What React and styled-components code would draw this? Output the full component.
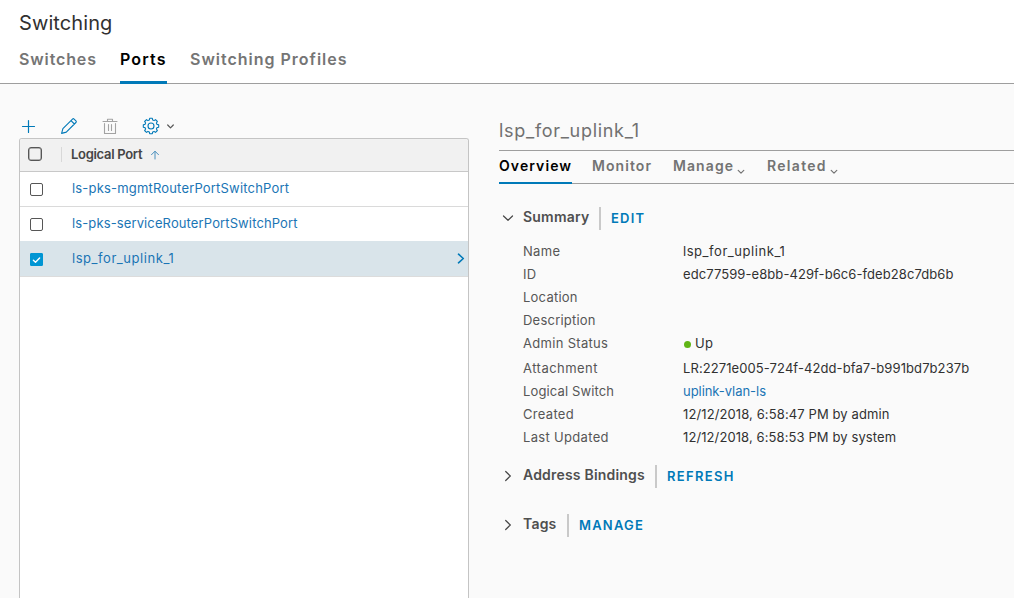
import React from "react";
import styled, { createGlobalStyle } from "styled-components";

const GlobalStyle = createGlobalStyle`
  * { box-sizing: border-box; }
  body {
    margin: 0;
    background: #fafafa;
    color: #313131;
    font: 400 13px/23px Inter, "Liberation Sans", sans-serif;
    white-space: nowrap;
    overflow: hidden;
  }
`;

const blue = "#0079b8";
const linkBlue = "#1a75b5";

const Page = styled.div`
  display: flex;
  flex-direction: column;
  height: 598px;
  overflow: hidden;
`;

const Header = styled.header`
  height: 84px;
  padding: 10px 0 0 19px;
  background: #fff;
  border-bottom: 1px solid #9e9e9e;
`;

const PageTitle = styled.h1`
  margin: 0;
  font-size: 20px;
  font-weight: 400;
  line-height: 26px;
  letter-spacing: 0.1px;
  color: #313131;
`;

const MainTabs = styled.nav`
  display: flex;
  gap: 23px;
  height: 48px;
`;

const MainTab = styled.a`
  height: 48px;
  padding-top: 12px;
  font-size: 16px;
  font-weight: 600;
  line-height: 23px;
  letter-spacing: ${(p) => p.$spacing};
  width: ${(p) => p.$width};
  color: ${(p) => (p.$active ? "#000" : "#757575")};
  border-bottom: 3px solid ${(p) => (p.$active ? blue : "transparent")};
`;

const Body = styled.main`
  display: flex;
  flex: 1;
  min-height: 0;
`;

const ListPane = styled.section`
  display: flex;
  flex-direction: column;
  width: 450px;
  margin-left: 19px;
  padding-top: 31px;
`;

const Toolbar = styled.div`
  display: flex;
  align-items: center;
  height: 22px;
  margin-bottom: 1px;
  padding-left: 1px;
`;

const ToolButton = styled.button`
  display: flex;
  align-items: center;
  gap: 6px;
  height: 20px;
  width: ${(p) => p.$width || "41px"};
  padding: 0;
  border: 0;
  background: none;
  color: ${(p) => (p.$disabled ? "#a3a3a3" : blue)};
`;

const Grid = styled.div`
  flex: 1;
  background: #fff;
  border: 1px solid #c4c4c4;
  border-bottom: 0;
  border-radius: 3px 3px 0 0;
`;

const GridHead = styled.div`
  display: flex;
  align-items: center;
  height: 33px;
  padding: 0 8px;
  background: #f1f1f1;
  border-bottom: 1px solid #c8c8c8;
  border-radius: 2px 2px 0 0;
`;

const HeadLabel = styled.span`
  display: flex;
  align-items: center;
  gap: 8px;
  height: 15px;
  margin: -1px 0 0 19px;
  padding-left: 9px;
  border-left: 1px solid #d8d8d8;
  font-weight: 600;
  letter-spacing: -0.3px;
  color: #454545;
`;

const GridRow = styled.div`
  display: flex;
  align-items: center;
  height: 35px;
  padding: 0 3px 0 10px;
  background: ${(p) => (p.$selected ? "#d9e4ea" : "#fff")};
  border-bottom: 1px solid ${(p) => (p.$selected ? "#dcdcdc" : "#dadada")};
  ${(p) => p.$selected && "height: 36px; margin-top: -1px; padding-top: 1px;"}
  & > svg { margin-top: -2px; }
`;

const Box = styled.span`
  display: flex;
  align-items: center;
  justify-content: center;
  flex: none;
  width: ${(p) => (p.$large ? 14 : 13)}px;
  height: ${(p) => (p.$large ? 14 : 13)}px;
  margin-top: ${(p) => (p.$large ? -2 : 1)}px;
  border: 1px solid ${(p) => (p.$checked ? "#0095d3" : "#565656")};
  border-radius: ${(p) => (p.$checked ? 1 : p.$large ? 3 : 2)}px;
  background: ${(p) => (p.$checked ? "#0095d3" : "#fff")};
  ${(p) => p.$large && "background: transparent; box-shadow: inset 0 0 0 0.5px #777;"}
`;

const PortLink = styled.a`
  flex: 1;
  margin-left: 29px;
  padding-bottom: 1px;
  letter-spacing: ${(p) => p.$spacing};
  color: ${linkBlue};
`;

const DetailPane = styled.section`
  flex: 1;
  margin-left: 30px;
  padding-top: 35px;
`;

const DetailTitle = styled.h2`
  height: 32px;
  margin: 0;
  border-bottom: 1px solid #9e9e9e;
  font-size: 18px;
  font-weight: 400;
  line-height: 23px;
  letter-spacing: 0.7px;
  color: #717171;
`;

const DetailTabs = styled.nav`
  display: flex;
  gap: 20px;
  height: 33px;
  border-bottom: 1px solid #9e9e9e;
`;

const DetailTab = styled.a`
  display: flex;
  gap: 3px;
  height: 33px;
  padding-top: 3px;
  width: ${(p) => p.$width};
  border-bottom: 2px solid ${(p) => (p.$active ? blue : "transparent")};
  font-size: 14px;
  font-weight: 600;
  letter-spacing: ${(p) => p.$spacing};
  color: ${(p) => (p.$active ? "#000" : "#737373")};
  & > svg { margin-top: 15px; }
`;

const SectionHead = styled.div`
  display: flex;
  align-items: center;
  height: 24px;
  margin-top: ${(p) => p.$top};
  padding-left: 3px;
`;

const SectionTitle = styled.h3`
  margin: 0 0 0 9px;
  padding: 0 10px 2px 0;
  font-size: 14px;
  font-weight: 600;
  line-height: 22px;
  letter-spacing: 0.2px;
  width: ${(p) => p.$width};
  color: #4f4f4f;
`;

const Action = styled.a`
  height: 23px;
  padding-left: 10px;
  border-left: 2px solid #c9c9c9;
  font-weight: 600;
  line-height: 22px;
  letter-spacing: ${(p) => p.$spacing};
  color: ${blue};
`;

const Properties = styled.dl`
  margin: 10px 0 0 24px;
`;

const Property = styled.div`
  display: flex;
  height: ${(p) => (p.$tall ? 25 : 23)}px;
`;

const Term = styled.dt`
  width: 160px;
  letter-spacing: ${(p) => p.$spacing};
  color: #565656;
`;

const Value = styled.dd`
  display: flex;
  align-items: center;
  height: 23px;
  margin: 0;
  letter-spacing: ${(p) => p.$spacing};
  color: ${(p) => (p.$link ? linkBlue : "#313131")};
`;

const StatusDot = styled.i`
  width: 7px;
  height: 7px;
  margin: 2px 4px 0 1px;
  border-radius: 50%;
  background: #60b515;
`;

const Stroke = ({ w, h, d, color = "currentColor", width = 1.2 }) => (
  <svg width={w} height={h} viewBox={`0 0 ${w} ${h}`} fill="none" stroke={color}
    strokeWidth={width} strokeLinecap="round" strokeLinejoin="round" style={{ flex: "none" }}>
    <path d={d} />
  </svg>
);

const gearPath = (() => {
  const pts = [];
  for (let i = 0; i < 8; i++) {
    const a = (i * Math.PI) / 4;
    [[-0.27, 6.2], [-0.17, 7.8], [0.17, 7.8], [0.27, 6.2]].forEach(([o, r]) =>
      pts.push(`${(9 + r * Math.cos(a + o)).toFixed(2)} ${(9 + r * Math.sin(a + o)).toFixed(2)}`)
    );
  }
  return `M${pts.join("L")}Z M12 9a3 3 0 1 1-6 0a3 3 0 1 1 6 0Z`;
})();

const ports = [
  { name: "ls-pks-mgmtRouterPortSwitchPort", spacing: "0.18px" },
  { name: "ls-pks-serviceRouterPortSwitchPort", spacing: "0.12px" },
  { name: "lsp_for_uplink_1", spacing: "0.55px", selected: true },
];

const properties = [
  ["Name", "0.3px", "lsp_for_uplink_1", "0.55px"],
  ["ID", "0.2px", "edc77599-e8bb-429f-b6c6-fdeb28c7db6b", "0.08px"],
  ["Location", "0.23px"],
  ["Description", "0.22px"],
  ["Admin Status", "0.31px", "Up", "0.3px", "status"],
  ["Attachment", "0.47px", "LR:2271e005-724f-42dd-bfa7-b991bd7b237b", "0.09px"],
  ["Logical Switch", "0.13px", "uplink-vlan-ls", "-0.05px", "link"],
  ["Created", "0.3px", "12/12/2018, 6:58:47 PM by admin", "0.11px"],
  ["Last Updated", "0.32px", "12/12/2018, 6:58:53 PM by system", "0.1px"],
];

const TabCaret = () => <Stroke w={8} h={6} d="M1.2 1.4L4 4.2L6.8 1.4" />;

export default function App() {
  return (
    <Page>
      <GlobalStyle />
      <Header>
        <PageTitle>Switching</PageTitle>
        <MainTabs>
          <MainTab $width="78px" $spacing="0.87px">Switches</MainTab>
          <MainTab $width="47px" $spacing="1.15px" $active>Ports</MainTab>
          <MainTab $width="158px" $spacing="0.99px">Switching Profiles</MainTab>
        </MainTabs>
      </Header>
      <Body>
        <ListPane>
          <Toolbar>
            <ToolButton $width="40px" aria-label="Add">
              <Stroke w={16} h={16} d="M8.5 2.5V14.5M2.5 8.5H14.5" />
            </ToolButton>
            <ToolButton aria-label="Edit">
              <Stroke w={18} h={18} width={1.1}
                d="M1.6 16.4L2.9 11.7L12.5 2.1Q13.3 1.3 14.1 2.1L15.9 3.9Q16.7 4.7 15.9 5.5L6.3 15.1ZM11 3.6L14.4 7" />
            </ToolButton>
            <ToolButton $disabled aria-label="Delete">
              <Stroke w={18} h={18} width={1.1}
                d="M2 4.5H16M6.5 4.3V2.2H11.5V4.3M3.5 6.5V16.5H14.5V6.5M7.5 7.5V13.5M10.5 7.5V13.5" />
            </ToolButton>
            <ToolButton aria-label="Settings" $width="34px">
              <Stroke w={18} h={18} d={gearPath} width={1.1} />
              <Stroke w={9} h={7} d="M1.7 2L4.5 4.8L7.3 2" color="#565656" />
            </ToolButton>
          </Toolbar>
          <Grid>
            <GridHead>
              <Box $large />
              <HeadLabel>
                Logical Port
                <Stroke w={10} h={10} d="M5 9V1.4M1.5 4.7L5 1.2L8.5 4.7" color="#4a90bd" width={1} />
              </HeadLabel>
            </GridHead>
            {ports.map((p) => (
              <GridRow key={p.name} $selected={p.selected}>
                <Box $checked={p.selected}>
                  {p.selected && <Stroke w={9} h={8} d="M1.4 4.2L3.5 6.2L7.6 2" color="#fff" width={1.4} />}
                </Box>
                <PortLink $spacing={p.spacing}>{p.name}</PortLink>
                {p.selected && <Stroke w={8} h={11} d="M1.5 1.2L6.3 5.5L1.5 9.8" color={blue} width={1.6} />}
              </GridRow>
            ))}
          </Grid>
        </ListPane>
        <DetailPane>
          <DetailTitle>lsp_for_uplink_1</DetailTitle>
          <DetailTabs>
            <DetailTab $width="73px" $spacing="1.08px" $active>Overview</DetailTab>
            <DetailTab $width="61px" $spacing="1.07px">Monitor</DetailTab>
            <DetailTab $width="74px" $spacing="1.08px">Manage<TabCaret /></DetailTab>
            <DetailTab $width="74px" $spacing="1.3px">Related<TabCaret /></DetailTab>
          </DetailTabs>
          <SectionHead $top="22px">
            <Stroke w={12} h={8} d="M1.5 2L6 6.3L10.5 2" color="#454545" />
            <SectionTitle $width="76px">Summary</SectionTitle>
            <Action $spacing="1.2px">EDIT</Action>
          </SectionHead>
          <Properties>
            {properties.map(([term, ts, value, vs, kind]) => (
              <Property key={term} $tall={kind === "status"}>
                <Term $spacing={ts}>{term}</Term>
                <Value $spacing={vs} $link={kind === "link"}>
                  {kind === "status" && <StatusDot />}
                  {value}
                </Value>
              </Property>
            ))}
          </Properties>
          <SectionHead $top="15px">
            <Stroke w={12} h={12} d="M3.7 1.5L8.3 6L3.7 10.5" color="#454545" />
            <SectionTitle $width="132px">Address Bindings</SectionTitle>
            <Action $spacing="1.33px">REFRESH</Action>
          </SectionHead>
          <SectionHead $top="25px">
            <Stroke w={12} h={12} d="M3.7 1.5L8.3 6L3.7 10.5" color="#454545" />
            <SectionTitle $width="44px">Tags</SectionTitle>
            <Action $spacing="1.2px">MANAGE</Action>
          </SectionHead>
        </DetailPane>
      </Body>
    </Page>
  );
}
